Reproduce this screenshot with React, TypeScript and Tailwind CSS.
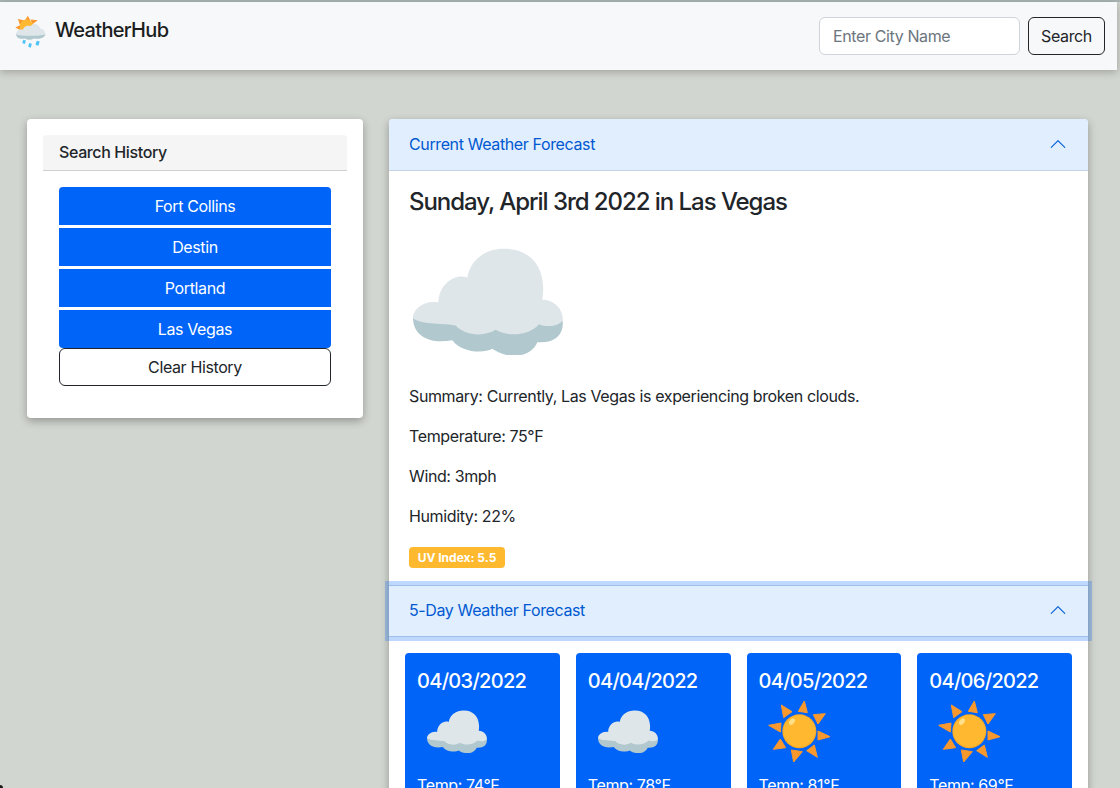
const cities = ["Fort Collins", "Destin", "Portland", "Las Vegas"];

const forecast = [
  { date: "04/03/2022", icon: "cloud", temp: "74" },
  { date: "04/04/2022", icon: "cloud", temp: "78" },
  { date: "04/05/2022", icon: "sun", temp: "81" },
  { date: "04/06/2022", icon: "sun", temp: "69" },
];

const rays = [
  "192,396 201,431 174,427",
  "123,408 155,428 130,446",
  "255,434 219,437 233,465",
  "85,469 122,462 120,489",
  "233,486 269,503 233,513",
  "120,510 136,536 99,541",
  "153,543 186,548 160,579",
  "222,528 231,565 199,545",
];

function CloudIcon({ className }: { className: string }) {
  return (
    <svg viewBox="42 40 450 320" className={className}>
      <path
        fill="#b0c8ce"
        d="M42 250C42 300 90 330 160 316C185 352 250 357 280 342C320 372 395 372 415 322C470 326 495 298 491 258L300 180Z"
      />
      <path
        fill="#dfe6ea"
        d="M42 250C70 270 140 265 170 272C200 305 260 305 290 285C320 305 390 305 420 268C450 280 480 272 491 258C495 230 470 195 430 195C445 100 395 42 320 42C265 40 215 70 205 128C170 115 120 145 118 203C80 195 42 220 42 250Z"
      />
    </svg>
  );
}

function SunIcon({ className }: { className: string }) {
  return (
    <svg viewBox="80 390 195 195" className={className}>
      {rays.map((points) => (
        <polygon key={points} points={points} fill="#f9982c" stroke="#f9982c" strokeWidth="3" strokeLinejoin="round" />
      ))}
      <circle cx="177" cy="487" r="51" fill="#f9a825" />
      <circle cx="177" cy="486" r="48" fill="#ffb830" />
      <ellipse cx="155" cy="458" rx="7" ry="11" fill="#ffe08a" transform="rotate(35 155 458)" />
    </svg>
  );
}

function LogoIcon() {
  return (
    <svg viewBox="40 44 100 100" className="h-[33px] w-[33px] shrink-0">
      <polygon points="82,46 90,62 72,62" fill="#f9982c" />
      <polygon points="52,56 70,60 58,74" fill="#f9982c" />
      <polygon points="112,60 96,72 90,58" fill="#f9982c" />
      <polygon points="44,82 60,74 60,90" fill="#f9982c" />
      <circle cx="78" cy="78" r="20" fill="#ffb830" />
      <path
        fill="#b0c8ce"
        d="M46 100C46 114 58 118 72 115C82 120 92 120 100 115C116 118 136 114 135 100Z"
      />
      <path
        fill="#dfe6ea"
        d="M46 102C60 109 120 109 135 102C134 90 126 86 120 85C116 70 98 66 90 78C78 74 68 82 68 88C56 86 47 92 46 102Z"
      />
      <path fill="#4fc3f7" d="M68 119L76 121L73 132L65 129Z" />
      <path fill="#4fc3f7" d="M86 129L94 131L91 143L83 140Z" />
      <path fill="#4fc3f7" d="M109 122L118 124L114 137L105 134Z" />
    </svg>
  );
}

function Chevron() {
  return (
    <svg viewBox="0 0 16 16" fill="#0a62d8" className="h-[18px] w-[18px] shrink-0 rotate-180">
      <path d="M1.646 4.646a.5.5 0 0 1 .708 0L8 10.293l5.646-5.647a.5.5 0 0 1 .708.708l-6 6a.5.5 0 0 1-.708 0l-6-6a.5.5 0 0 1 0-.708z" />
    </svg>
  );
}

export default function App() {
  return (
    <div className="relative flex h-[788px] flex-col overflow-hidden bg-[#d2d6d0] font-['Inter',sans-serif] text-base tracking-[-0.38px] text-[#212529]">
      <div className="h-[2px] w-full shrink-0 bg-[#a9b6b3]" />
      <header className="flex h-[68px] w-[1117px] shrink-0 justify-between bg-[#f7f8fa] pl-[14px] pr-[12px] shadow-[0_2px_8px_rgba(0,0,0,0.25)]">
        <div className="flex items-start gap-2 pt-[13px]">
          <LogoIcon />
          <span className="pt-[2px] text-xl font-medium leading-[26px] tracking-[-0.7px] text-[#1b1e21]">WeatherHub</span>
        </div>
        <form className="flex items-start gap-2 pt-[15px]">
          <input
            placeholder="Enter City Name"
            className="h-[38px] w-[201px] rounded-md border border-[#ced4da] bg-white px-[13px] text-base outline-none placeholder:text-[#6c757d]"
          />
          <button type="button" className="h-[38px] w-[77px] rounded-md border border-[#212529] bg-transparent text-base">
            Search
          </button>
        </form>
      </header>

      <main className="flex min-h-0 flex-1 items-start gap-[26px] pl-[27px] pt-[49px]">
        <aside className="h-[299px] w-[336px] shrink-0 rounded-[4px] bg-white p-4 shadow-[0_3px_8px_rgba(0,0,0,0.3)]">
          <h2 className="h-[36px] rounded-t-[4px] border-b border-[#d0d0d0] bg-[#f5f5f5] px-4 text-base font-medium leading-[34px]">
            Search History
          </h2>
          <div className="flex flex-col px-4 pt-4">
            {cities.map((city, i) => (
              <button
                key={city}
                type="button"
                className={
                  i === 0
                    ? "mb-[3px] h-[38px] rounded-t-[4px] bg-[#0064f9] text-base text-white"
                    : i === 3
                      ? "h-[38px] rounded-b-[4px] bg-[#0064f9] text-base text-white"
                      : "mb-[3px] h-[38px] bg-[#0064f9] text-base text-white"
                }
              >
                {city}
              </button>
            ))}
            <button type="button" className="h-[38px] rounded-md border border-[#212529] bg-white text-base">
              Clear History
            </button>
          </div>
        </aside>

        <section className="w-[699px] shrink-0 rounded-t-[4px] bg-white shadow-[0_3px_8px_rgba(0,0,0,0.3)]">
          <div className="flex h-[52px] items-center justify-between rounded-t-[4px] border-b border-[#c5d3e6] bg-[#e0eefe] pb-[2px] pl-[20px] pr-[21px] text-[#0059d1]">
            <span>Current Weather Forecast</span>
            <Chevron />
          </div>
          <div className="flex h-[414px] flex-col items-start pl-[20px] pt-[16px]">
            <h1 className="text-2xl font-medium leading-[29px] tracking-[-1.05px] text-[#212529]">Sunday, April 3rd 2022 in Las Vegas</h1>
            <CloudIcon className="ml-[4px] mt-[32px] h-[107px] w-[150px]" />
            <p className="mt-[29px] leading-6">Summary: Currently, Las Vegas is experiencing broken clouds.</p>
            <p className="mt-4 leading-6">Temperature: 75°F</p>
            <p className="mt-4 leading-6">Wind: 3mph</p>
            <p className="mt-4 leading-6">Humidity: 22%</p>
            <span className="mt-[19px] flex h-[21px] w-[96px] items-center justify-center rounded-[4px] bg-[#ffb92e] text-xs font-bold tracking-normal text-white">
              UV Index: 5.5
            </span>
          </div>
          <div className="relative z-10 flex h-[52px] items-center justify-between border-y border-[#9dbfe9] bg-[#e0eefe] pb-[2px] pl-[20px] pr-[21px] text-[#0059d1] shadow-[0_0_0_4px_rgba(13,110,253,0.27)]">
            <span>5-Day Weather Forecast</span>
            <Chevron />
          </div>
          <div className="grid grid-cols-4 gap-[16px] px-4 pt-4">
            {forecast.map((day) => (
              <div key={day.date} className="h-[200px] rounded-[4px] bg-[#0064f9] px-3 pt-[14px] text-white">
                <h3 className="text-xl font-medium leading-[28px] tracking-[-0.7px]">{day.date}</h3>
                {day.icon === "cloud" ? (
                  <CloudIcon className="ml-[10px] mt-[15px] h-[43px] w-[60px]" />
                ) : (
                  <SunIcon className="ml-[8px] mt-[4px] h-[65px] w-[65px]" />
                )}
                <p className={day.icon === "cloud" ? "mt-[20px] leading-6" : "mt-[9px] leading-6"}>
                  Temp: {day.temp}°F
                </p>
              </div>
            ))}
          </div>
        </section>
      </main>
      <div className="absolute bottom-0 left-0 h-[3px] w-[3px] rounded-tr-[3px] bg-[#1a1a1a]" />
    </div>
  );
}
